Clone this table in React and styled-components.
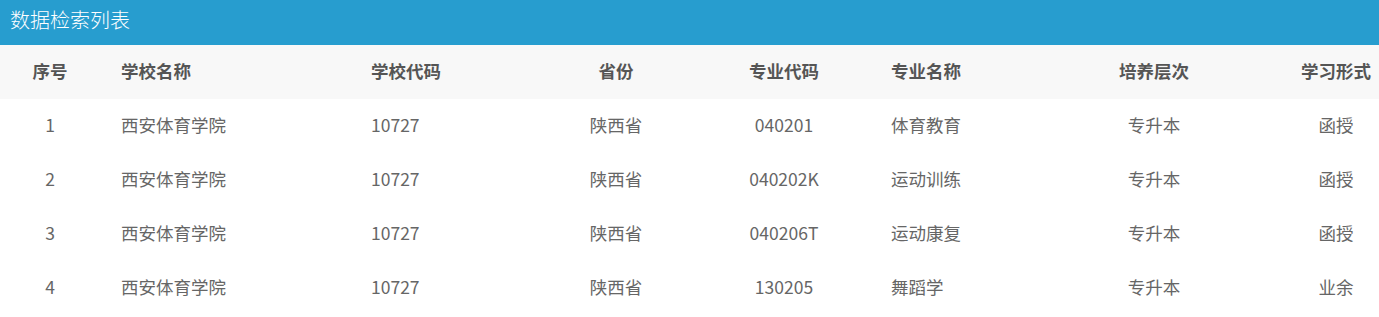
import styled, { createGlobalStyle } from "styled-components";

const GlobalStyle = createGlobalStyle`
  body {
    margin: 0;
    background: #fff;
    font-family: "Noto Sans CJK SC", "Noto Sans", sans-serif;
  }
`;

const columns = [
  { key: "no", title: "序号", width: 100, align: "center", pad: 0 },
  { key: "school", title: "学校名称", width: 250, align: "left", pad: 21 },
  { key: "code", title: "学校代码", width: 190, align: "left", pad: 21 },
  { key: "province", title: "省份", width: 152, align: "center", pad: 0 },
  { key: "majorCode", title: "专业代码", width: 184, align: "center", pad: 0 },
  { key: "major", title: "专业名称", width: 164, align: "left", pad: 15 },
  { key: "level", title: "培养层次", width: 228, align: "center", pad: 0 },
  { key: "form", title: "学习形式", width: 111, align: "center", pad: 25 },
];

const rows = [
  { no: "1", school: "西安体育学院", code: "10727", province: "陕西省", majorCode: "040201", major: "体育教育", level: "专升本", form: "函授" },
  { no: "2", school: "西安体育学院", code: "10727", province: "陕西省", majorCode: "040202K", major: "运动训练", level: "专升本", form: "函授" },
  { no: "3", school: "西安体育学院", code: "10727", province: "陕西省", majorCode: "040206T", major: "运动康复", level: "专升本", form: "函授" },
  { no: "4", school: "西安体育学院", code: "10727", province: "陕西省", majorCode: "130205", major: "舞蹈学", level: "专升本", form: "业余" },
];

const template = columns.map((c) => `${c.width}px`).join(" ");

export default function App() {
  return (
    <>
      <GlobalStyle />
      <Panel>
        <TitleBar>数据检索列表</TitleBar>
        <HeadRow>
          {columns.map((c) => (
            <Cell key={c.key} $align={c.align} $pad={c.pad}>
              {c.title}
            </Cell>
          ))}
        </HeadRow>
        {rows.map((row) => (
          <BodyRow key={row.no}>
            {columns.map((c) => (
              <Cell key={c.key} $align={c.align} $pad={c.pad}>
                {row[c.key]}
              </Cell>
            ))}
          </BodyRow>
        ))}
      </Panel>
    </>
  );
}

const Panel = styled.div`
  width: 1379px;
  background: #fff;
`;

const TitleBar = styled.div`
  height: 45px;
  line-height: 40px;
  padding-left: 10px;
  background-color: #279dcf;
  color: #fff;
  font-size: 20px;
  font-weight: 300;
`;

const Row = styled.div`
  display: grid;
  grid-template-columns: ${template};
  box-sizing: border-box;
  height: 54px;
  padding-bottom: 3px;
  align-items: center;
`;

const HeadRow = styled(Row)`
  background-color: #f8f8f8;
  color: #555;
  font-size: 17.5px;
  font-weight: 700;
`;

const BodyRow = styled(Row)`
  color: #666;
  font-size: 17.5px;
`;

const Cell = styled.div`
  text-align: ${(p) => p.$align};
  padding-left: ${(p) => p.$pad}px;
  white-space: nowrap;
`;
